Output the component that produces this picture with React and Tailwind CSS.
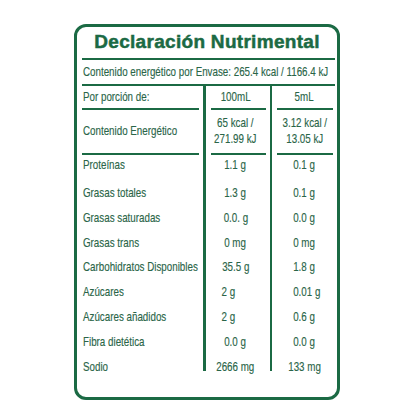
import React from 'react';

const rows = [
  { label: 'Proteínas', a: '1.1 g', b: '0.1 g' },
  { label: 'Grasas totales', a: '1.3 g', b: '0.1 g' },
  { label: 'Grasas saturadas', a: '0.0. g', b: '0.0 g' },
  { label: 'Grasas trans', a: '0 mg', b: '0 mg' },
  { label: 'Carbohidratos Disponibles', a: '35.5 g', b: '1.8 g' },
  { label: 'Azúcares', a: '2 g', b: '0.01 g', shiftA: true, shiftB: true },
  { label: 'Azúcares añadidos', a: '2 g', b: '0.6 g', shiftA: true },
  { label: 'Fibra dietética', a: '0.0 g', b: '0.0 g' },
  { label: 'Sodio', a: '2666 mg', b: '133 mg' },
];

function L({ children }) {
  return <span className="inline-block whitespace-nowrap scale-x-[0.725] origin-left">{children}</span>;
}

function C({ children }) {
  return <span className="inline-block whitespace-nowrap text-center scale-x-[0.725] origin-center">{children}</span>;
}

function Seg() {
  return <div className="ml-[5px] mr-[4px] h-[2px] bg-[#1b6a44]" />;
}

function Column({ kind }) {
  const isLabel = kind === 'label';
  const W = isLabel ? L : C;
  const align = isLabel ? 'justify-start pl-[6px]' : kind === 'a' ? 'justify-center pr-[4px]' : 'justify-center';
  const header = isLabel ? 'Por porción de:' : kind === 'a' ? '100mL' : '5mL';
  const energy = isLabel ? (
    'Contenido Energético'
  ) : kind === 'a' ? (
    <>65 kcal /<br />271.99 kJ</>
  ) : (
    <>3.12 kcal /<br />13.05 kJ</>
  );
  return (
    <div className="flex flex-col">
      <div className={`h-[22px] flex items-center ${align}`}><W>{header}</W></div>
      <Seg />
      <div className={`h-[42.5px] flex items-center leading-[16.6px] ${align}`}><W>{energy}</W></div>
      <Seg />
      {rows.map((r, i) => {
        const text = isLabel ? r.label : kind === 'a' ? r.a : r.b;
        let extra = '';
        if (kind === 'a' && r.shiftA) extra = 'pr-[19px]';
        if (kind === 'b' && r.shiftB) extra = 'pl-[5px]';
        return (
          <div
            key={i}
            className={
              i === 0
                ? `h-[26px] pt-[2px] leading-[15px] flex items-start ${align} ${extra}`
                : `h-[24.9px] flex items-center ${align} ${extra}`
            }
          >
            <W>{text}</W>
          </div>
        );
      })}
    </div>
  );
}

export default function App() {
  return (
    <div className="w-[416px] h-[416px] bg-white pt-[24px] pl-[74px] font-['Liberation_Sans',Arial,sans-serif] text-[13.5px] text-[#2a6548] [-webkit-text-stroke:0.15px_#2a6548]">
      <div className="w-[266px] h-[376px] border-[3px] border-[#1b6a44] rounded-[12px] overflow-hidden">
        <div className="h-[30.5px] flex items-center justify-center font-bold text-[19px] tracking-[0.3px] text-[#1b6a44] [-webkit-text-stroke:0.5px_#1b6a44]">
          Declaración Nutrimental
        </div>
        <div className="ml-[5px] mr-[2px] h-[2px] bg-[#1b6a44]" />
        <div className="h-[24.5px] flex items-center pl-[6px]">
          <L>Contenido energético por Envase: 265.4 kcal / 1166.4 kJ</L>
        </div>
        <div className="ml-[5px] mr-[2px] h-[2px] bg-[#1b6a44]" />
        <div className="flex items-start">
          <div className="w-[126px]">
            <Column kind="label" />
          </div>
          <div className="w-[2.5px] h-[285px] bg-[#1b6a44]" />
          <div className="w-[64px]">
            <Column kind="a" />
          </div>
          <div className="w-[2.5px] h-[285px] bg-[#1b6a44]" />
          <div className="flex-1">
            <Column kind="b" />
          </div>
        </div>
      </div>
    </div>
  );
}
